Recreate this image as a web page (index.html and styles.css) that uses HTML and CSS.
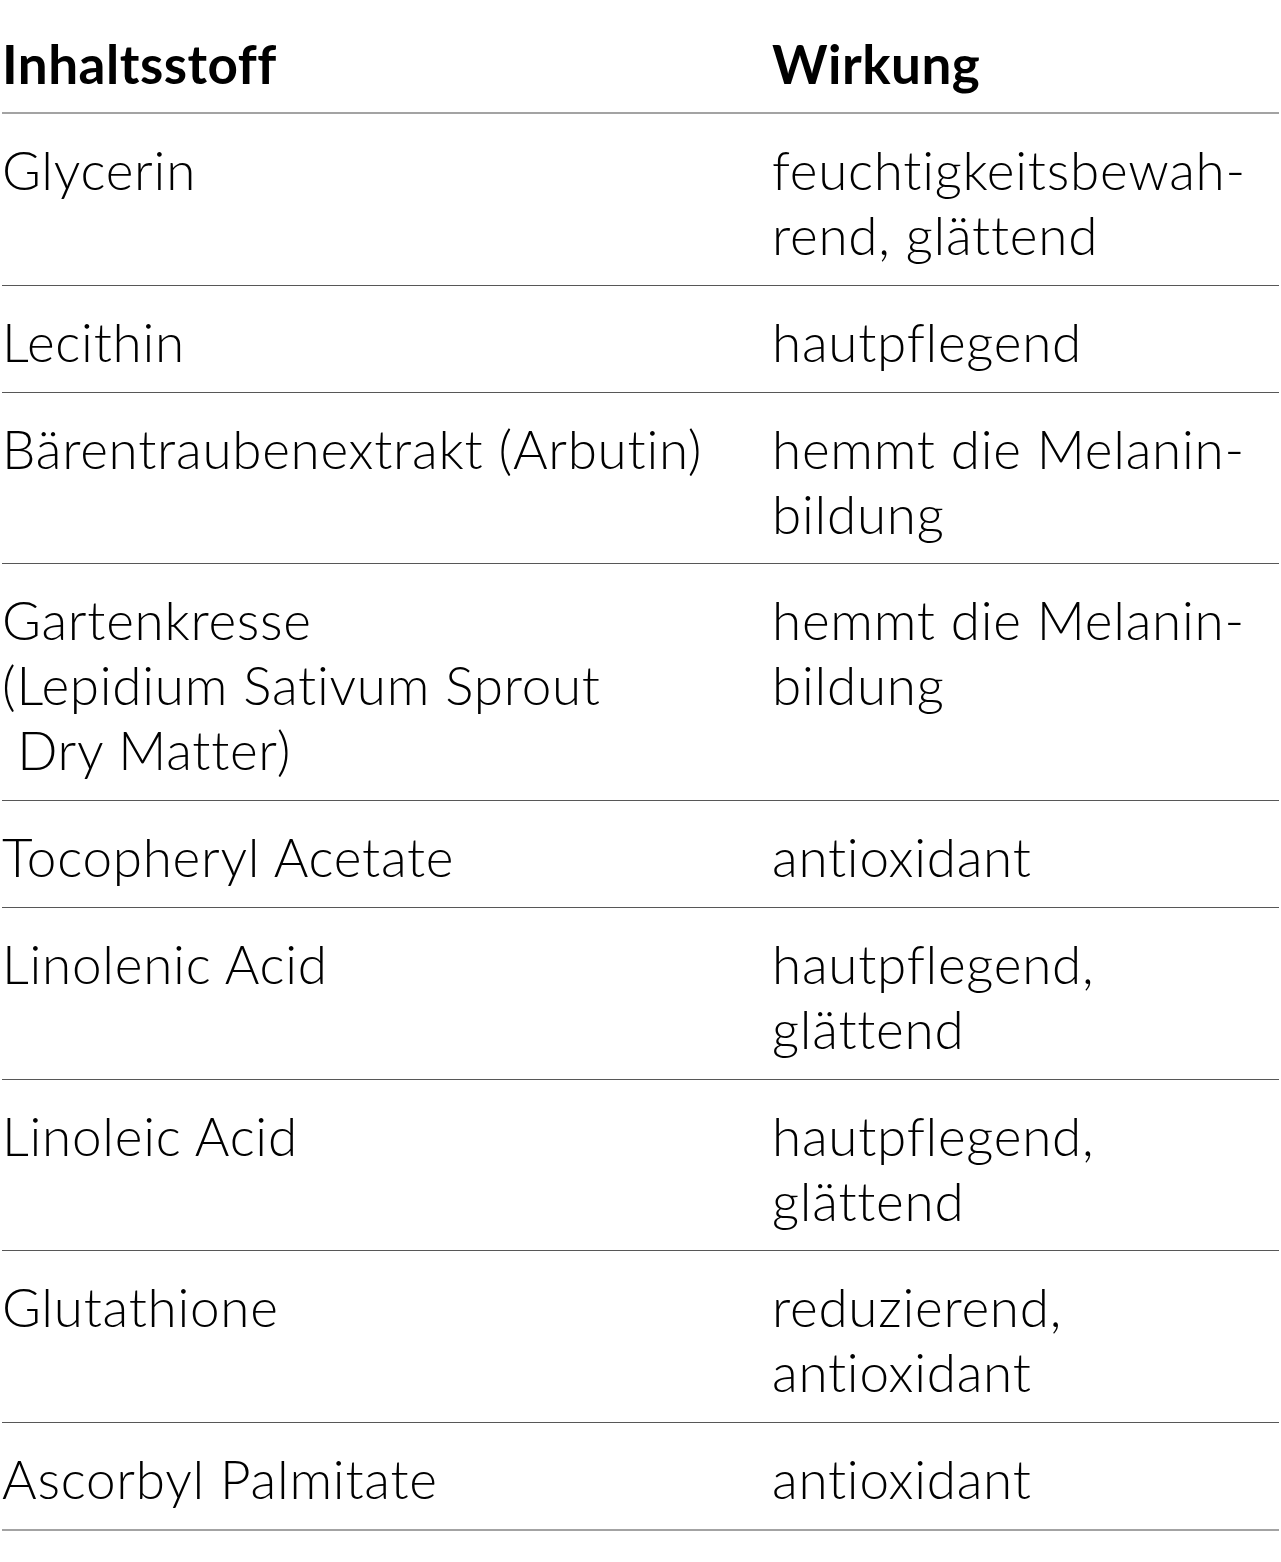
FILE: index.html
```html
<!DOCTYPE html>
<html lang="de">
<head>
<meta charset="utf-8">
<title>Inhaltsstoffe</title>
<link rel="stylesheet" href="styles.css">
</head>
<body>
<table class="ingredients">
  <thead>
    <tr><th class="col-name">Inhaltsstoff</th><th class="col-effect">Wirkung</th></tr>
  </thead>
  <tbody>
    <tr><td>Glycerin</td><td>feuchtigkeitsbewah-<br>rend, glättend</td></tr>
    <tr><td>Lecithin</td><td>hautpflegend</td></tr>
    <tr><td>Bärentraubenextrakt (Arbutin)</td><td>hemmt die Melanin-<br>bildung</td></tr>
    <tr><td>Gartenkresse<br>(Lepidium Sativum Sprout<br>&nbsp;Dry Matter)</td><td>hemmt die Melanin-<br>bildung</td></tr>
    <tr><td>Tocopheryl Acetate</td><td>antioxidant</td></tr>
    <tr><td>Linolenic Acid</td><td>hautpflegend,<br>glättend</td></tr>
    <tr><td>Linoleic Acid</td><td>hautpflegend,<br>glättend</td></tr>
    <tr><td>Glutathione</td><td>reduzierend,<br>antioxidant</td></tr>
    <tr class="last"><td>Ascorbyl Palmitate</td><td>antioxidant</td></tr>
  </tbody>
</table>
</body>
</html>
```
FILE: styles.css
```css
html, body {
  margin: 0;
  padding: 0;
  background: #fff;
}

body {
  font-family: Lato, "Noto Sans", sans-serif;
  color: #000;
}

.ingredients {
  margin: 6px 0 0 2px;
  width: 1277px;
  border-collapse: separate;
  border-spacing: 0;
  table-layout: fixed;
  font-size: 53px;
  font-weight: 300;
  line-height: 65px;
  letter-spacing: 0.75px;
  font-variant-ligatures: none;
  font-feature-settings: "liga" 0, "clig" 0;
}

.ingredients th,
.ingredients td {
  text-align: left;
  vertical-align: top;
  padding: 23px 0 17.75px 0;
  white-space: nowrap;
}

.ingredients th {
  font-weight: 700;
  letter-spacing: 0.5px;
  padding: 25px 0 16px 0;
  border-bottom: 2px solid #a3a3a3;
}

.col-name {
  width: 770px;
}

.ingredients td {
  border-bottom: 1px solid #575757;
}

.ingredients tr.last td {
  border-bottom: 2px solid #a3a3a3;
}
```
